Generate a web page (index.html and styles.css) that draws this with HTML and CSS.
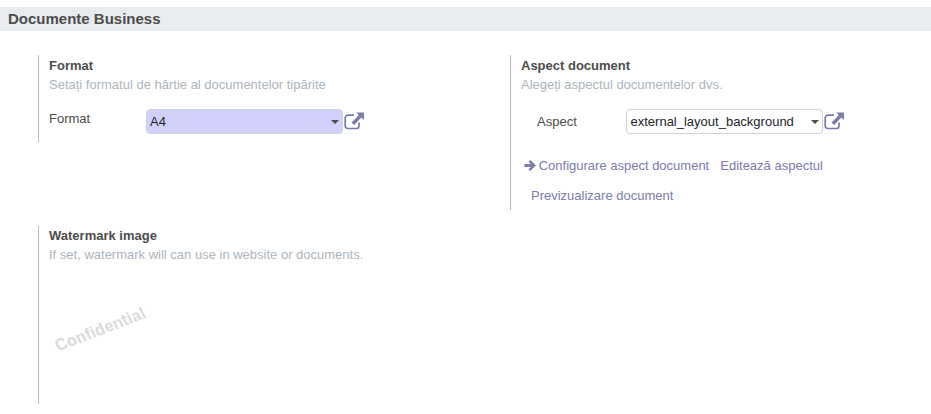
FILE: index.html
```html
<!DOCTYPE html>
<html lang="ro">
<head>
<meta charset="utf-8">
<title>Documente Business</title>
<link rel="stylesheet" href="styles.css">
</head>
<body>
<h2 class="section-title">Documente Business</h2>
<div class="settings">
  <div class="setting setting-format">
    <div class="setting-name">Format</div>
    <div class="setting-help">Setați formatul de hârtie al documentelor tipărite</div>
    <div class="field-row">
      <span class="field-label">Format</span>
      <div class="select select-filled"><span class="select-value">A4</span><span class="caret"></span></div>
      <svg class="ext-link" viewBox="0 0 20 18" aria-hidden="true"><path d="M15 10.5v3.2a2.8 2.8 0 0 1-2.8 2.8H4a2.8 2.8 0 0 1-2.8-2.8V6A2.8 2.8 0 0 1 4 3.2h6" fill="none" stroke="currentColor" stroke-width="1.7"/><path d="M12.2 0.5H20v7.6l-2.6-2.6-7.3 7.4-2.5-2.5 7.3-7.4z" fill="currentColor"/></svg>
    </div>
  </div>
  <div class="setting setting-aspect">
    <div class="setting-name">Aspect document</div>
    <div class="setting-help">Alegeți aspectul documentelor dvs.</div>
    <div class="field-row aspect-row">
      <span class="field-label aspect-label">Aspect</span>
      <div class="select select-plain"><span class="select-value">external_layout_background</span><span class="caret"></span></div>
      <svg class="ext-link" viewBox="0 0 20 18" aria-hidden="true"><path d="M15 10.5v3.2a2.8 2.8 0 0 1-2.8 2.8H4a2.8 2.8 0 0 1-2.8-2.8V6A2.8 2.8 0 0 1 4 3.2h6" fill="none" stroke="currentColor" stroke-width="1.7"/><path d="M12.2 0.5H20v7.6l-2.6-2.6-7.3 7.4-2.5-2.5 7.3-7.4z" fill="currentColor"/></svg>
    </div>
    <div class="links">
      <a class="link link-config"><svg class="arrow" viewBox="0 0 12 11" aria-hidden="true"><path d="M6.2 0L12 5.5 6.2 11 4.5 9.3 6.9 7.1H0.4V3.9H6.9L4.5 1.7z" fill="currentColor"/></svg>Configurare aspect document</a>
      <a class="link link-edit">Editează aspectul</a>
    </div>
    <a class="link link-preview">Previzualizare document</a>
  </div>
  <div class="setting setting-watermark">
    <div class="setting-name setting-name-flush">Watermark image</div>
    <div class="setting-help">If set, watermark will can use in website or documents.</div>
    <div class="watermark-preview"><span class="watermark-text">Confidential</span></div>
  </div>
</div>
</body>
</html>
```

FILE: styles.css
```css
* { box-sizing: border-box; }
html, body { margin: 0; padding: 0; }
body {
  width: 931px;
  height: 414px;
  overflow: hidden;
  background: #fff;
  color: #4c4c4c;
  font-family: "Liberation Sans", Arial, sans-serif;
  font-size: 13px;
  line-height: 19px;
  padding-top: 7px;
}
.section-title {
  margin: 0;
  height: 24px;
  padding-left: 8px;
  background: #e9ecef;
  color: #4c4c4c;
  font-size: 15px;
  font-weight: 700;
  line-height: 24px;
}
.settings {
  display: grid;
  grid-template-columns: 472px 1fr;
  grid-template-rows: 155px 178px;
  row-gap: 16px;
  margin: 24px 0 0 38px;
}
.setting {
  border-left: 1px solid #bbb;
  padding-left: 10px;
}
.setting-format { height: 87px; }
.setting-name {
  font-weight: 700;
  color: #4c4c4c;
  padding-top: 1px;
}
.setting-name-flush { padding-top: 0; }
.setting-help { color: #adb5bd; }
.field-row {
  display: flex;
  align-items: center;
  margin-top: 15px;
}
.field-label { width: 97px; margin-top: -6px; }
.select {
  position: relative;
  width: 197px;
  height: 25px;
  border: 1px solid #ced4da;
  border-radius: 4px;
  padding-left: 3px;
  line-height: 24px;
  color: #212529;
}
.select-filled { background: #d0d0fb; }
.select-plain { padding-left: 3.5px; }
.caret {
  position: absolute;
  right: 3px;
  top: 10px;
  border-top: 4px solid #4c4c4c;
  border-left: 4px solid transparent;
  border-right: 4px solid transparent;
}
.ext-link {
  width: 20px;
  height: 18px;
  margin-left: 1px;
  margin-top: -2px;
  color: #7c7bad;
}
.aspect-label { width: 89px; margin: 0 0 0 16px; }
.links {
  display: flex;
  margin-top: 22px;
  padding-left: 3px;
}
.link { color: #7c7bad; }
.arrow {
  width: 12px;
  height: 11px;
  margin-right: 2.7px;
  vertical-align: -1px;
  color: #7c7bad;
}
.link-edit { margin-left: 11px; }
.link-preview {
  display: block;
  margin-top: 11px;
  padding-left: 10px;
}
.watermark-preview {
  padding: 56px 0 0 4px;
}
.watermark-text {
  display: inline-block;
  transform: rotate(-27deg) skewY(6deg);
  color: #d8d8d8;
  font-size: 16px;
  font-weight: 700;
  letter-spacing: 0.2px;
  filter: blur(0.5px);
}
```
